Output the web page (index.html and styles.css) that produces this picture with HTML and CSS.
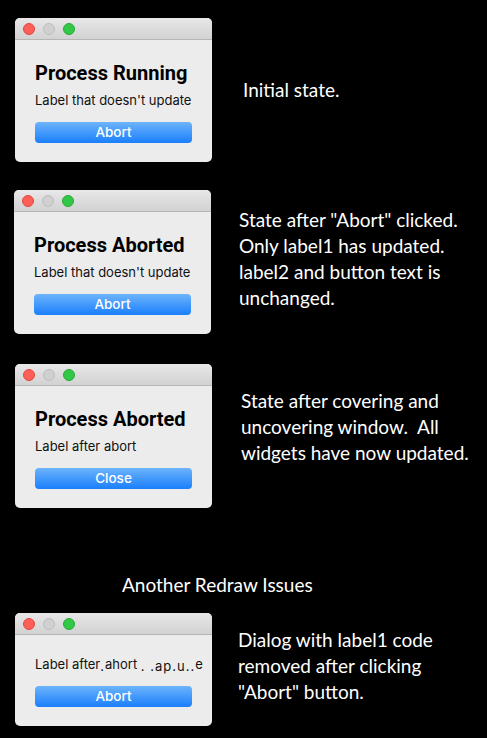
FILE: index.html
```html
<!DOCTYPE html>
<html lang="en">
<head>
    <meta charset="UTF-8">
    <title>Redraw Issues</title>
    <link rel="stylesheet" href="styles.css">
</head>
<body>
    <div class="page">
        <div class="row row-first">
            <div class="window">
                <div class="titlebar">
                    <span class="light red"></span>
                    <span class="light gray"></span>
                    <span class="light green"></span>
                </div>
                <div class="window-body">
                    <div class="title">Process Running</div>
                    <div class="label">Label that doesn't update</div>
                    <div class="button">Abort</div>
                </div>
            </div>
            <div class="note note-1">Initial state.</div>
        </div>

        <div class="row row-second">
            <div class="window">
                <div class="titlebar">
                    <span class="light red"></span>
                    <span class="light gray"></span>
                    <span class="light green"></span>
                </div>
                <div class="window-body">
                    <div class="title">Process Aborted</div>
                    <div class="label">Label that doesn't update</div>
                    <div class="button">Abort</div>
                </div>
            </div>
            <div class="note note-2">State after "Abort" clicked.<br>Only label1 has updated.<br>label2 and button text is<br>unchanged.</div>
        </div>

        <div class="row row-third">
            <div class="window">
                <div class="titlebar">
                    <span class="light red"></span>
                    <span class="light gray"></span>
                    <span class="light green"></span>
                </div>
                <div class="window-body">
                    <div class="title">Process Aborted</div>
                    <div class="label">Label after abort</div>
                    <div class="button">Close</div>
                </div>
            </div>
            <div class="note note-3">State after covering and<br>uncovering window.&nbsp; All<br>widgets have now updated.</div>
        </div>

        <h2 class="heading">Another Redraw Issues</h2>

        <div class="row row-fourth">
            <div class="window">
                <div class="titlebar">
                    <span class="light red"></span>
                    <span class="light gray"></span>
                    <span class="light green"></span>
                </div>
                <div class="window-body">
                    <div class="label">Label after<span class="glitch">.</span>ahort <span class="glitch">. .ap.u..</span>e</div>
                    <div class="button">Abort</div>
                </div>
            </div>
            <div class="note note-4">Dialog with label1 code<br>removed after clicking<br>"Abort" button.</div>
        </div>
    </div>
</body>
</html>
```

FILE: styles.css
```css
* {
    margin: 0;
    padding: 0;
    box-sizing: border-box;
}

body {
    background-color: #000;
    color: white;
    font-family: Inter, Roboto, sans-serif;
}

.page {
    width: 487px;
    padding-left: 15px;
}

.row {
    display: flex;
    align-items: flex-start;
}

.row-first {
    padding-top: 18px;
}

.row-second {
    margin-top: 28px;
    margin-left: -1px;
}

.row-third {
    margin-top: 30px;
}

.row-fourth {
    margin-top: 15px;
}

/* mac window */
.window {
    width: 197px;
    flex-shrink: 0;
    background-color: #ececec;
    border-radius: 5px;
    overflow: hidden;
    color: #000;
}

.titlebar {
    height: 22px;
    display: flex;
    align-items: center;
    gap: 8px;
    padding-left: 8px;
    background: linear-gradient(#e9e7e9, #d2d2d2);
    border-bottom: 1px solid #b6b6b6;
}

.light {
    width: 12px;
    height: 12px;
    border-radius: 50%;
}

.light.red {
    background-color: #fc5f57;
    border: 1px solid #e2463f;
}

.light.gray {
    background-color: #d0d0d0;
    border: 1px solid #bdbdbd;
}

.light.green {
    background-color: #33c748;
    border: 1px solid #27aa35;
}

.window-body {
    padding: 21px 20px 19px;
}

.title {
    font-family: Roboto, Inter, sans-serif;
    font-size: 20px;
    line-height: 24px;
    font-weight: 700;
    white-space: nowrap;
}

.label {
    margin-top: 7px;
    font-size: 13px;
    line-height: 16px;
    color: #111;
    white-space: nowrap;
}

.row-fourth .label {
    margin-top: 0;
}

.glitch {
    letter-spacing: 1px;
    position: relative;
    top: 2px;
}

.button {
    margin-top: 14px;
    height: 21px;
    border-radius: 4px;
    background: linear-gradient(#6db4fb, #1a7ffb);
    color: white;
    font-size: 13.5px;
    font-weight: 500;
    line-height: 21px;
    text-align: center;
}

/* captions */
.note {
    font-family: Lato, "Open Sans", sans-serif;
    font-size: 19px;
    line-height: 26px;
    color: #fff;
    white-space: nowrap;
}

.note-1 {
    margin-left: 31px;
    margin-top: 59px;
}

.note-2 {
    margin-left: 28px;
    margin-top: 17px;
}

.note-3 {
    margin-left: 29px;
    margin-top: 24px;
}

.note-4 {
    margin-left: 26px;
    margin-top: 14px;
}

.heading {
    font-family: Lato, "Open Sans", sans-serif;
    font-size: 19px;
    line-height: 26px;
    font-weight: normal;
    margin-top: 64px;
    padding-left: 107px;
}
```
